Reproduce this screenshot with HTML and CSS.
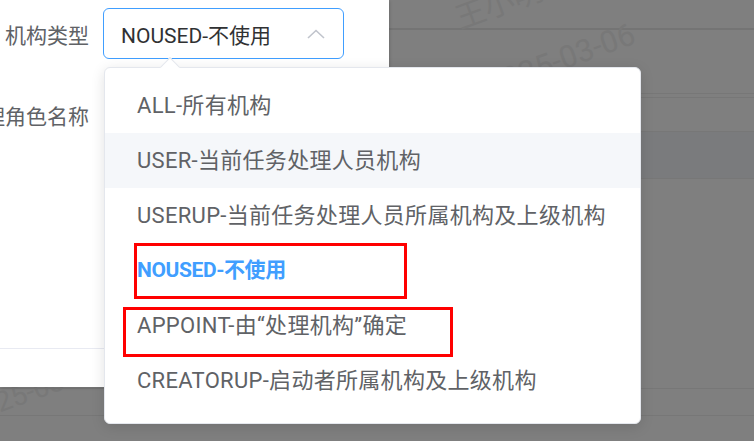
FILE: index.html
```html
<!DOCTYPE html>
<html lang="zh-CN">
<head>
<meta charset="utf-8">
<title>机构类型</title>
<link rel="stylesheet" href="styles.css">
</head>
<body>
<div class="screen">
  <div class="table">
    <div class="trow h1"></div>
    <div class="trow h2"></div>
    <div class="trow h3"></div>
    <div class="trow h4"></div>
    <div class="trow h5 hover"></div>
    <div class="trow h6"></div>
    <div class="trow h7"></div>
    <div class="trow h8"></div>
    <span class="wm wm1">王小明</span>
    <span class="wm wm2">2025-03-06</span>
    <span class="wm wm3">2025-03-06</span>
  </div>

  <div class="dialog">
    <div class="dialog-body">
      <div class="form-item">
        <div class="label"><span>机构类型</span></div>
        <div class="select">
          <span class="select-value">NOUSED-不使用</span>
          <svg class="chevron" width="18" height="10" viewBox="0 0 18 10"><path d="M1 9 L9 1.5 L17 9" fill="none" stroke="#c0c4cc" stroke-width="1.6"/></svg>
        </div>
      </div>
      <div class="form-item">
        <div class="label"><span>处理角色名称</span></div>
      </div>
    </div>
  </div>

  <div class="dropdown">
    <div class="arrow"></div>
    <ul class="options">
      <li class="option">ALL-所有机构</li>
      <li class="option hovered">USER-当前任务处理人员机构</li>
      <li class="option">USERUP-当前任务处理人员所属机构及上级机构</li>
      <li class="option selected">NOUSED-不使用</li>
      <li class="option">APPOINT-由“处理机构”确定</li>
      <li class="option">CREATORUP-启动者所属机构及上级机构</li>
    </ul>
  </div>

  <div class="mark mark1"></div>
  <div class="mark mark2"></div>
</div>
</body>
</html>
```

FILE: styles.css
```css
* { box-sizing: border-box; }
html, body {
  margin: 0;
  padding: 0;
  width: 754px;
  height: 441px;
  overflow: hidden;
  background: #7f7f7f;
  font-family: Roboto, "Noto Sans CJK SC", "Noto Sans", sans-serif;
}
.screen {
  position: relative;
  width: 754px;
  height: 441px;
  overflow: hidden;
}

/* background table under the modal mask */
.table {
  display: flex;
  flex-direction: column;
  height: 441px;
  background: #7f7f7f;
}
.trow { border-bottom: 1px solid #777777; flex: none; }
.h1 { height: 30px; border-bottom: 2px solid #747474; }
.h2 { height: 64px; }
.h3 { height: 4px; }
.h4 { height: 34px; }
.h5 { height: 47px; }
.hover { background: #7a7b7d; }
.h6 { height: 210px; }
.h7 { height: 27px; }
.h8 { flex: 1; border-bottom: 0; }

.wm {
  position: absolute;
  color: #787878;
  font-size: 28px;
  line-height: 28px;
  white-space: nowrap;
  transform: rotate(-20deg);
  transform-origin: left bottom;
}
.wm1 { left: 462px; top: 4px; font-size: 30px; line-height: 30px; }
.wm2 { left: 492px; top: 70px; font-size: 31px; line-height: 31px; }
.wm3 { left: -28px; top: 400px; }

/* dialog */
.dialog {
  position: absolute;
  left: 0;
  top: 0;
  width: 389px;
  height: 387px;
  background: #ffffff;
  box-shadow: 1px 1px 3px rgba(0,0,0,0.15);
}
.dialog-body {
  height: 349px;
  border-bottom: 1px solid #e8eaf2;
  padding-top: 8px;
  display: flex;
  flex-direction: column;
  gap: 30px;
}
.form-item {
  display: flex;
  align-items: center;
  gap: 14px;
  height: 51px;
}
.label {
  width: 89px;
  flex: none;
  display: flex;
  justify-content: flex-end;
  white-space: nowrap;
  font-size: 21px;
  color: #606266;
}
.select {
  width: 241px;
  height: 51px;
  border: 1.5px solid #409eff;
  border-radius: 6px;
  display: flex;
  align-items: center;
  justify-content: space-between;
  padding: 0 18px 0 17px;
}
.select-value {
  font-size: 21px;
  color: #303133;
  white-space: nowrap;
}
.chevron { display: block; }

/* dropdown */
.dropdown {
  position: absolute;
  left: 104px;
  top: 67px;
  width: 537px;
  height: 357px;
  background: #ffffff;
  border: 1px solid #e4e7ed;
  border-radius: 6px;
  box-shadow: 0 3px 14px rgba(0,0,0,0.12);
  padding: 10px 0 17px;
}
.arrow {
  position: absolute;
  left: 58px;
  top: -8px;
  width: 14px;
  height: 14px;
  background: #ffffff;
  border-left: 1px solid #e4e7ed;
  border-top: 1px solid #e4e7ed;
  transform: rotate(45deg);
}
.options {
  list-style: none;
  margin: 0;
  padding: 0;
  position: relative;
}
.option {
  height: 55px;
  line-height: 55px;
  padding-left: 32px;
  font-size: 22px;
  letter-spacing: 0.3px;
  color: #606266;
  white-space: nowrap;
}
.option.hovered { background: #f5f7fa; }
.option.selected {
  color: #409eff;
  font-weight: 700;
  font-size: 21px;
  letter-spacing: -0.4px;
}

/* red annotation boxes */
.mark {
  position: absolute;
  border: 3px solid #ff0000;
}
.mark1 { left: 134px; top: 243px; width: 273px; height: 56px; }
.mark2 { left: 123px; top: 307px; width: 330px; height: 50px; }
```
